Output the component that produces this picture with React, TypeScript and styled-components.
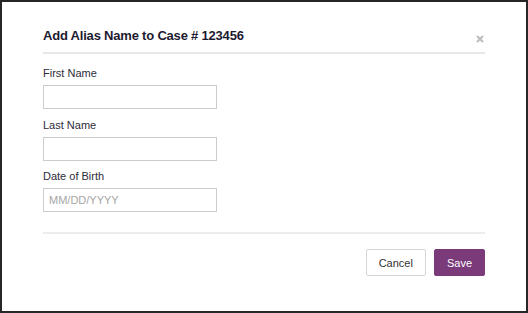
import React from 'react';
import styled, { createGlobalStyle } from 'styled-components';

const GlobalStyle = createGlobalStyle`
  html, body {
    margin: 0;
    padding: 0;
    background: #ffffff;
  }
  * {
    box-sizing: border-box;
  }
`;

const Frame = styled.div`
  width: 528px;
  height: 313px;
  border: 2px solid #262626;
  background: #ffffff;
  padding: 0 41px;
  font-family: 'Liberation Sans', Arial, sans-serif;
  display: flex;
  flex-direction: column;
`;

const Header = styled.div`
  display: flex;
  align-items: flex-start;
  justify-content: space-between;
  height: 52px;
  padding-top: 26px;
  border-bottom: 2px solid #e8e8e8;
`;

const Title = styled.h4`
  margin: 0;
  font-size: 13px;
  line-height: 15px;
  letter-spacing: -0.2px;
  font-weight: bold;
  color: #1d1a30;
`;

const CloseButton = styled.button`
  border: none;
  background: none;
  padding: 0;
  margin-right: 1px;
  margin-top: 7px;
  display: flex;
  cursor: pointer;
`;

const Body = styled.div`
  display: flex;
  flex-direction: column;
  gap: 9.5px;
  padding-top: 13px;
  padding-bottom: 20px;
  border-bottom: 2px solid #ececec;
`;

const Field = styled.div`
  display: flex;
  flex-direction: column;
`;

const Label = styled.label`
  font-size: 11px;
  color: #2e2b38;
  line-height: 13px;
  margin-bottom: 5px;
`;

const Input = styled.input`
  width: 174px;
  height: 24px;
  border: 1px solid #cccccc;
  padding: 0 5px;
  font-family: inherit;
  font-size: 11px;
  color: #333333;
  outline: none;

  &::placeholder {
    color: #a6a6a6;
  }
`;

const Footer = styled.div`
  display: flex;
  justify-content: flex-end;
  gap: 8px;
  padding-top: 15px;
`;

const Button = styled.button<{ $primary?: boolean }>`
  height: 27px;
  padding: 0 12px;
  font-family: inherit;
  font-size: 11px;
  border-radius: 2px;
  cursor: pointer;
  border: 1px solid ${(p) => (p.$primary ? '#7b3a79' : '#d6d6d6')};
  background: ${(p) => (p.$primary ? '#7b3a79' : '#ffffff')};
  color: ${(p) => (p.$primary ? '#ffffff' : '#333333')};
`;

const fields = [
  { label: 'First Name', placeholder: '' },
  { label: 'Last Name', placeholder: '' },
  { label: 'Date of Birth', placeholder: 'MM/DD/YYYY' },
];

function App(): JSX.Element {
  return (
    <>
      <GlobalStyle />
      <Frame>
        <Header>
          <Title>Add Alias Name to Case # 123456</Title>
          <CloseButton aria-label="Close">
            <svg width="8" height="8" viewBox="0 0 8 8">
              <path d="M1 1L7 7M7 1L1 7" stroke="#bdbdbd" strokeWidth="2" />
            </svg>
          </CloseButton>
        </Header>
        <Body>
          {fields.map((f) => (
            <Field key={f.label}>
              <Label>{f.label}</Label>
              <Input type="text" placeholder={f.placeholder} />
            </Field>
          ))}
        </Body>
        <Footer>
          <Button>Cancel</Button>
          <Button $primary>Save</Button>
        </Footer>
      </Frame>
    </>
  );
}

export default App;
